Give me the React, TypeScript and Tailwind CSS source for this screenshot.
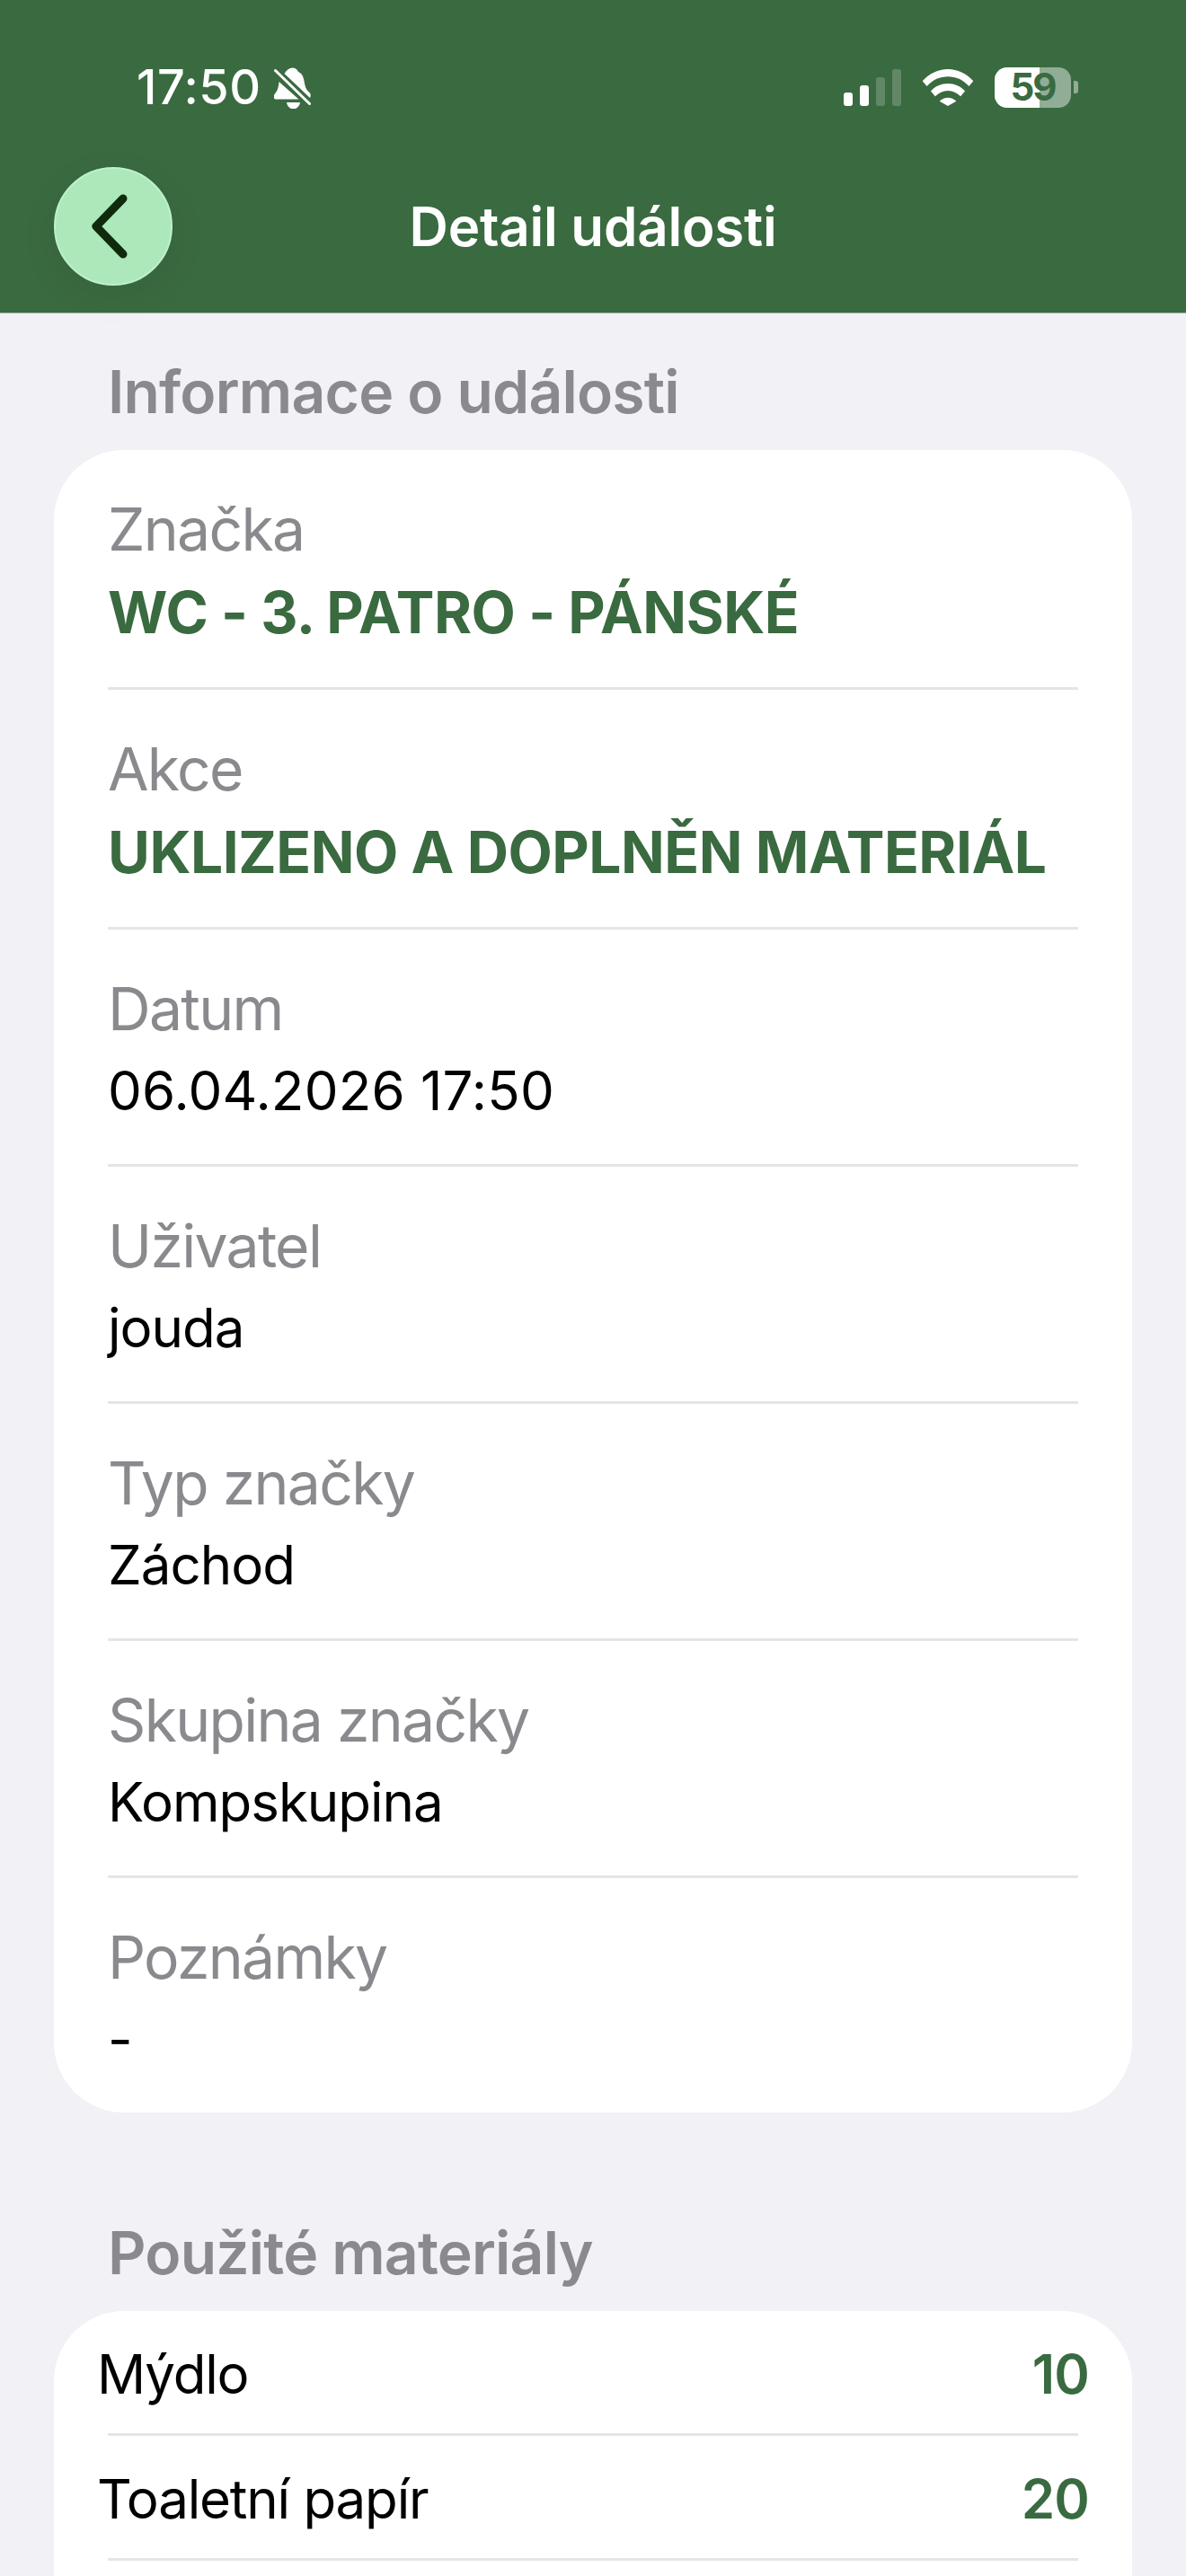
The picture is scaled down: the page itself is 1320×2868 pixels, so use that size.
const GREEN = 'text-[#3a6a40]';

// ikona ztlumeneho zvonku ve status baru
function BellOff() {
  return (
    <svg viewBox="10 8 42 48" className="w-[42px] h-[48px]" fill="white">
      <path d="M21.5 17C24 13 27 10.5 30.5 10.5c3 0 5.5 2 6.5 4.500 4 1.500 5.500 5 6.500 10 1 6 2 10 6 13 1.500 1.500 1.500 4 .5 6z" />
      <path d="M15.500 26c-.5 6-1.500 10-5 14-1.500 2-1.500 5.500 1.500 5.500h25.500z" />
      <path d="M24 49h15c-.5 4-3.500 7.500-7.500 7.500S24.500 53 24 49z" />
      <path d="M11.500 13.500 49.500 50.500" stroke="white" strokeWidth="3" strokeLinecap="round" fill="none" />
    </svg>
  );
}

function StatusBar() {
  return (
    <div className="flex items-center justify-between h-[186px] pl-[152px] pr-[120px] pt-[8px] text-white">
      <div className="flex items-center gap-[14px]">
        <span className="text-[54px] font-medium leading-none tracking-[0.5px]">17:50</span>
        <BellOff />
      </div>
      <div className="flex items-center gap-[23px]">
        <div className="flex items-end gap-[7.500px] h-[41px]">
          <div className="w-[10.500px] h-[15px] rounded-[3px] bg-white" />
          <div className="w-[10.500px] h-[23px] rounded-[3px] bg-white" />
          <div className="w-[10.500px] h-[32px] rounded-[3px] bg-white/20" />
          <div className="w-[10.500px] h-[41px] rounded-[3px] bg-white/20" />
        </div>
        <svg viewBox="0 0 58 42" className="w-[58px] h-[41px]" fill="white">
          <path d="M0 13.500C8 5 18 0 29 0s21 5 29 13.500l-5 6C46 12 38 8.500 29 8.500S12 12 5 19.500z" />
          <path d="M9.500 25c5-5.500 12-8.500 19.500-8.500S43.500 19.500 48.500 25l-5 6c-4-4-9-6.500-14.500-6.500S18.500 27 14.500 31z" />
          <path d="M19.500 36.500c2.500-2.500 6-4 9.500-4s7 1.500 9.500 4L29 42z" />
        </svg>
        <div className="flex items-center gap-[3px]">
          <div className="relative w-[85px] h-[45px] rounded-[14px] bg-white/45 flex items-center justify-center">
            <div className="absolute inset-y-0 left-0 w-[50px] rounded-l-[14px] bg-white" />
            <span className="relative text-[42px] font-bold leading-none tracking-[-2px] text-[#3a6a40]">59</span>
          </div>
          <div className="w-[5px] h-[14px] rounded-r-[3px] bg-white/45" />
        </div>
      </div>
    </div>
  );
}

function Header() {
  return (
    <header className="bg-[#3a6a40] h-[349px] border-b border-[#a9b5aa]">
      <StatusBar />
      <div className="relative flex items-center justify-center h-[132px]">
        <button className="absolute left-[60px] top-0 w-[132px] h-[132px] rounded-full bg-[#ace8b9] border-2 border-[#bdf2c9] flex items-center justify-center shadow-[0_12px_48px_rgba(0,0,0,0.05)]">
          <svg viewBox="0 0 44 72" className="w-[44px] h-[72px] -ml-[8px]" fill="none" stroke="#0f2a0c" strokeWidth="9" strokeLinecap="round" strokeLinejoin="round">
            <path d="M37 5 7 36l30 31" />
          </svg>
        </button>
        <h1 className="text-[60px] font-semibold text-white leading-none tracking-[-0.2px]">Detail události</h1>
      </div>
    </header>
  );
}

type Field = { label: string; value: string; kind?: 'accent' | 'date' };

const fields: Field[] = [
  { label: 'Značka', value: 'WC - 3. PATRO - PÁNSKÉ', kind: 'accent' },
  { label: 'Akce', value: 'UKLIZENO A DOPLNĚN MATERIÁL', kind: 'accent' },
  { label: 'Datum', value: '06.04.2026 17:50', kind: 'date' },
  { label: 'Uživatel', value: 'jouda' },
  { label: 'Typ značky', value: 'Záchod' },
  { label: 'Skupina značky', value: 'Kompskupina' },
  { label: 'Poznámky', value: '-' },
];

const materials = [
  { name: 'Mýdlo', count: 10 },
  { name: 'Toaletní papír', count: 20 },
];

function SectionTitle({ children }: { children: string }) {
  return <h2 className="px-[120px] text-[66px] font-semibold leading-[78px] tracking-[-0.8px] text-[#8a8a8e]">{children}</h2>;
}

function FieldRow({ field, last }: { field: Field; last: boolean }) {
  const accent = field.kind === 'accent';
  let valueClass = 'mt-[16px] text-[60px] leading-[72px] tracking-[-1px] text-black';
  if (accent) valueClass = `mt-[18px] text-[64px] leading-[72px] font-bold tracking-[-0.45px] ${GREEN}`;
  if (field.kind === 'date') valueClass = 'mt-[16px] text-[60px] leading-[72px] tracking-[0.2px] text-black';

  return (
    <div className={`pt-[49px] ${accent ? 'pb-[47px]' : 'pb-[46px]'} ${last ? '' : 'border-b-[3px] border-[#e5e5e8]'}`}>
      <div className="text-[66px] leading-[78px] tracking-[-1.7px] text-[#8a8a8e]">{field.label}</div>
      <div className={valueClass}>{field.value}</div>
    </div>
  );
}

export default function App() {
  return (
    <div className="flex flex-col w-[1320px] h-[2868px] overflow-hidden bg-[#f1f1f6] font-['Inter','Noto_Sans',sans-serif]">
      <Header />
      <main className="flex flex-col flex-1 pt-[48px]">
        <SectionTitle>Informace o události</SectionTitle>
        <section className="mx-[60px] mt-[26px] rounded-[78px] bg-white px-[60px]">
          {fields.map((f, i) => (
            <FieldRow key={f.label} field={f} last={i === fields.length - 1} />
          ))}
        </section>

        <div className="mt-[117px]">
          <SectionTitle>Použité materiály</SectionTitle>
        </div>
        {/* karta pokracuje pod spodni okraj obrazovky */}
        <section className="flex-1 mx-[60px] mt-[26px] rounded-t-[78px] bg-white">
          {materials.map((m) => (
            <div key={m.name}>
              <div className="flex items-center justify-between h-[136px] pt-[4px] px-[48px]">
                <span className="text-[60px] leading-[72px] tracking-[-1.2px] text-black">{m.name}</span>
                <span className={`text-[60px] leading-[72px] font-semibold tracking-[-0.8px] ${GREEN}`}>{m.count}</span>
              </div>
              <div className="mx-[60px] h-[3px] bg-[#e5e5e8]" />
            </div>
          ))}
        </section>
      </main>
    </div>
  );
}
